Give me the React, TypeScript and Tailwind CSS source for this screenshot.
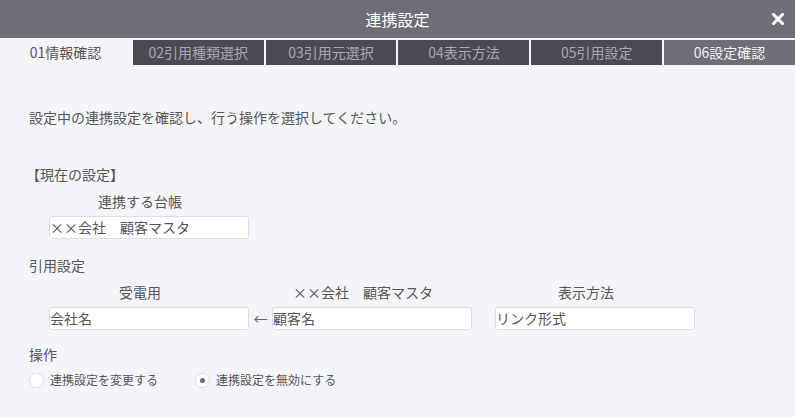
const tabs = ["01情報確認", "02引用種類選択", "03引用元選択", "04表示方法", "05引用設定", "06設定確認"];

function Field({ label, value }: { label: string; value: string }) {
  return (
    <div className="flex flex-col">
      <div className="w-[182px] text-center text-[14px] leading-5 text-[#555]">{label}</div>
      <div className="mt-[5px] h-[23px] w-[200px] rounded-[3px] border border-[#dcdde2] bg-white text-[14px] leading-[21px] text-[#555]">
        {value}
      </div>
    </div>
  );
}

function Radio({ label, checked }: { label: string; checked?: boolean }) {
  return (
    <label className="flex items-center gap-[6px]">
      <span className="flex h-[15px] w-[15px] items-center justify-center rounded-full border border-[#e2e3e8] bg-white shadow-[0_0_1px_rgba(0,0,0,0.1)]">
        {checked && <span className="h-[5px] w-[5px] rounded-full bg-[#6b6b6b]" />}
      </span>
      <span className="text-[12px] leading-[18px] text-[#555]">{label}</span>
    </label>
  );
}

export default function App() {
  return (
    <div
      className="h-[417px] w-[795px] overflow-hidden bg-[#f4f5f9]"
      style={{ fontFamily: '"Noto Sans CJK JP", "Noto Sans", sans-serif' }}
    >
      {/* header */}
      <div className="relative flex h-[38px] items-center justify-center bg-[#6f6e78]">
        <span className="text-[16px] text-white">連携設定</span>
        <svg className="absolute right-[11px] top-[13px]" width="12" height="12" viewBox="0 0 12 12">
          <path d="M1.5 1.5 L10.5 10.5 M10.5 1.5 L1.5 10.5" stroke="white" strokeWidth="3" strokeLinecap="round" />
        </svg>
      </div>

      {/* tabs */}
      <div className="flex gap-[2px] pt-[2px]">
        {tabs.map((t, i) => (
          <div
            key={t}
            className={
              "flex h-[25px] flex-1 items-center justify-center text-[14px] " +
              (i === 0
                ? "bg-[#f4f5f9] text-[#555]"
                : i === 5
                ? "bg-[#6f6e78] text-[#f2f2f4]"
                : "bg-[#4b4a54] text-[#a9a8b1]")
            }
          >
            {t}
          </div>
        ))}
      </div>

      {/* body */}
      <div className="pl-[29px]">
        <p className="mt-[42px] text-[14px] leading-5 text-[#555]">
          設定中の連携設定を確認し、行う操作を選択してください。
        </p>

        <p className="-ml-[3px] mt-[37px] text-[14px] leading-5 text-[#555]">【現在の設定】</p>
        <div className="ml-[20px] mt-[7px]">
          <Field label="連携する台帳" value="××会社　顧客マスタ" />
        </div>

        <p className="mt-[16px] text-[14px] leading-5 text-[#555]">引用設定</p>
        <div className="ml-[20px] mt-[7px] flex items-end">
          <Field label="受電用" value="会社名" />
          <span className="mb-[2px] w-[23px] text-center text-[14px] leading-5 text-[#666]">←</span>
          <Field label="××会社　顧客マスタ" value="顧客名" />
          <span className="w-[23px]" />
          <Field label="表示方法" value="リンク形式" />
        </div>

        <p className="mt-[14px] text-[14px] leading-5 text-[#555]">操作</p>
        <div className="mt-[7px] flex items-center gap-[37px]">
          <Radio label="連携設定を変更する" />
          <Radio label="連携設定を無効にする" checked />
        </div>
      </div>
    </div>
  );
}
